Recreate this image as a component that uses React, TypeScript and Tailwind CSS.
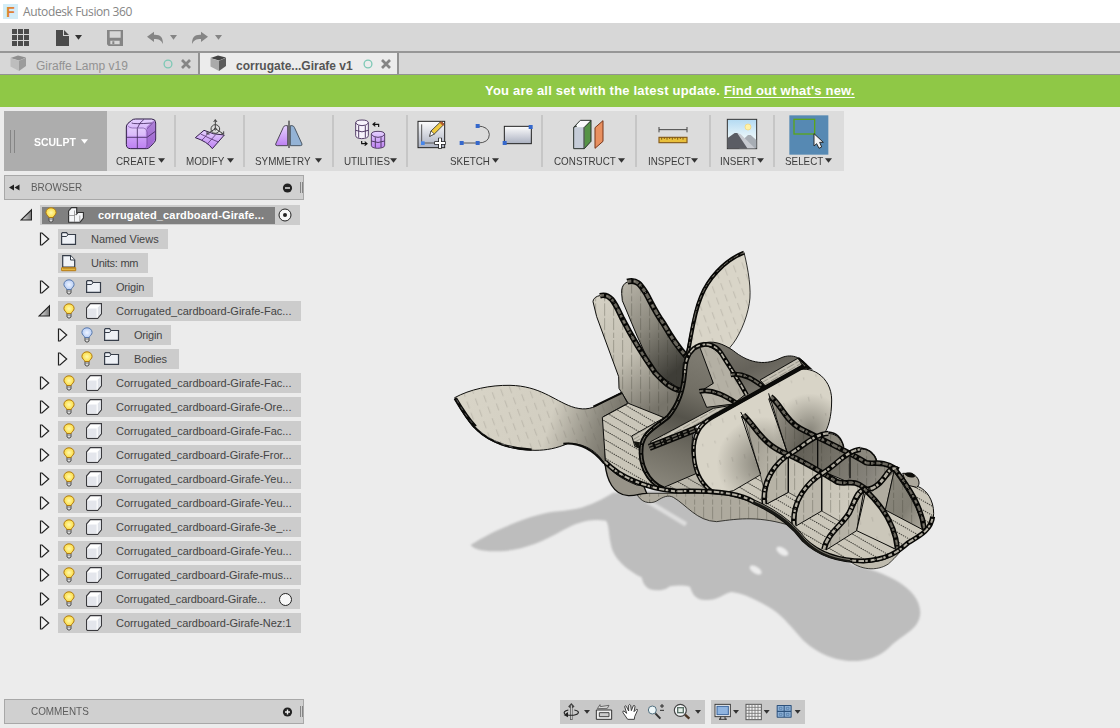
import React from "react";

/* ---------- shared bits ---------- */

const Caret = ({ className = "" }: { className?: string }) => (
  <svg className={"shrink-0 " + className} width="7" height="5" viewBox="0 0 7 5">
    <path d="M0 0.300H7L3.500 4.800Z" fill="currentColor" />
  </svg>
);

/* ---------- top bars ---------- */

const TitleBar = () => (
  <div className="flex h-[23px] shrink-0 items-center bg-white pl-[3px]">
    <span className="flex h-[15px] w-[15px] items-center justify-center bg-[#d3edf7] text-[14px] leading-none font-bold text-[#df8334]">
      F
    </span>
    <span className="ml-[5px] font-['Open_Sans'] text-[12px] tracking-[-0.380px] text-[#858585]">Autodesk Fusion 360</span>
  </div>
);

const QuickBar = () => (
  <div className="h-[30px] shrink-0 border-b-2 border-[#969696] bg-[#d7d7d7]">
    <svg width="240" height="28" viewBox="0 69 720 84">
      <path
        fill="#4b4b4b"
        d="M36 87h15v15h-15zM54 87h15v15h-15zM72 87h15v15h-15zM36 105h15v15h-15zM54 105h15v15h-15zM72 105h15v15h-15zM36 123h15v15h-15zM54 123h15v15h-15zM72 123h15v15h-15z"
      />
      <path fill="#4b4b4b" d="M168 90h21v18h18v30h-39zM192 90l15 15h-15z" />
      <path fill="#333" d="M225 105h21l-10.500 14z" />
      <path fill="#858585" fillRule="evenodd" d="M321 90h48v48h-43l-5-5zM329 94v19h33v-19zM331 122v11h28v-11zM337 124h6v8h-6z" />
      <g fill="#858585">
        <path d="M441 110l21-15v9c20-1 27 8 27 28c-6-12-12-15-27-15v9z" />
        <path d="M624 110l-21-15v9c-20-1-27 8-27 28c6-12 12-15 27-15v9z" />
        <path d="M510 105h21l-10.500 14zM645 105h21l-10.500 14z" />
      </g>
    </svg>
  </div>
);

const CubeGlyph = ({ dark }: { dark?: boolean }) => (
  <svg width="17" height="17" viewBox="0 0 17 17" className="shrink-0">
    <path d="M0.500 3L8 0.500L16 2.500L9 5.500Z" fill={dark ? "#444" : "#8f8f8f"} />
    <path d="M0.500 3.300L9 5.800V16L0.500 11.500Z" fill={dark ? "#aaa" : "#bdbdbd"} />
    <path d="M9 5.800L16 2.800V11L9 16Z" fill={dark ? "#5d5d5d" : "#9c9c9c"} />
  </svg>
);

const TabTail = () => (
  <>
    <svg width="10" height="10" viewBox="0 0 10 10" className="shrink-0">
      <circle cx="5" cy="5" r="3.900" fill="none" stroke="#7cc8b5" strokeWidth="1.300" />
    </svg>
    <svg width="10" height="10" viewBox="0 0 10 10" className="ml-[8px] shrink-0">
      <path d="M1 1L9 9M9 1L1 9" stroke="#858585" strokeWidth="2.700" />
    </svg>
  </>
);

const Tabs = () => (
  <div className="flex h-[22px] shrink-0 border-b border-[#929292] bg-[#d7d7d7] text-[12px]">
    <div className="flex w-[200px] items-center border-r-2 border-[#929292] pl-[10px]">
      <CubeGlyph />
      <span className="mt-[4px] ml-[9px] w-[127px] text-[#929292]">Giraffe Lamp v19</span>
      <TabTail />
    </div>
    <div className="flex w-[199px] items-center border-r-2 border-[#929292] bg-[#ececec] pl-[10px]">
      <CubeGlyph dark />
      <span className="mt-[4px] ml-[9px] w-[127px] font-bold whitespace-nowrap text-[#555]">corrugate...Girafe v1</span>
      <TabTail />
    </div>
  </div>
);

/* ---------- ribbon ---------- */

const Defs = () => (
  <svg width="0" height="0" className="absolute">
    <defs>
      <linearGradient id="violet" x1="0" y1="0" x2="0" y2="1">
        <stop offset="0" stopColor="#e5d2ff" />
        <stop offset="1" stopColor="#bd80f2" />
      </linearGradient>
      <linearGradient id="sheet" x1="0" y1="0" x2="0" y2="1">
        <stop offset="0" stopColor="#fdfdfd" />
        <stop offset="1" stopColor="#aab0c0" />
      </linearGradient>
      <linearGradient id="sky" x1="0" y1="0" x2="0" y2="1">
        <stop offset="0" stopColor="#b3daf2" />
        <stop offset="0.600" stopColor="#e8f5fa" />
      </linearGradient>
      <linearGradient id="tri" x1="0" y1="0" x2="1" y2="0">
        <stop offset="0" stopColor="#eee" />
        <stop offset="1" stopColor="#777" />
      </linearGradient>
      <radialGradient id="lit">
        <stop offset="0" stopColor="#fff9ae" />
        <stop offset="1" stopColor="#fbdc43" />
      </radialGradient>
      <radialGradient id="unlit">
        <stop offset="0" stopColor="#eef4ff" />
        <stop offset="1" stopColor="#b7cdf5" />
      </radialGradient>
    </defs>
  </svg>
);

const CreateIcon = () => (
  <svg width="36" height="40" viewBox="369 30 108 120">
    <path d="M379 66Q379 60 384 55L395 46Q399 42 407 42H455Q467 42 467 54V102Q467 108 463 112L451 125Q445 131 439 131H392Q379 131 379 118Z" fill="url(#violet)" stroke="#2d1b44" strokeWidth="3" />
    <path d="M440 66L460 47Q466 50 466 56V103L449 125Q442 130 440 125Z" fill="#8b50bd" opacity="0.600" />
    <path d="M388 70H436V92H384V76Z" fill="#fff" opacity="0.250" />
    <path d="M379 97H441L466 79M412 130V70Q418 52 432 43M395 54Q402 58 455 54" fill="none" stroke="#452a60" strokeWidth="2.500" />
    <path d="M384 62Q387 69 397 69H430Q441 70 441 82V118Q441 128 436 130M441 72L462 50" fill="none" stroke="#6a4590" strokeWidth="1.800" />
  </svg>
);

const ModifyIcon = () => (
  <svg width="36" height="40" viewBox="576 30 108 120">
    <path d="M586 98L612 76Q640 90 673 90L637 131Q622 110 586 98Z" fill="url(#violet)" stroke="#35204c" strokeWidth="3" />
    <path d="M602 87Q632 102 655 111M624 82Q618 96 606 105M647 89L622 117" fill="none" stroke="#5a3775" strokeWidth="2.500" />
    <g fill="none" stroke="#444" strokeWidth="3">
      <circle cx="646" cy="72" r="13" />
      <path d="M646 71V44M641 51L646 44L651 51M646 71L669 86M671 79V87H663M646 71L623 86M621 79V87H629" />
      <circle cx="646" cy="72" r="3" />
    </g>
  </svg>
);

const SymmetryIcon = () => (
  <svg width="36" height="40" viewBox="812 30 108 120">
    <path d="M862 62H855Q851 62 849 67L826 117Q825 122 831 122H862Z" fill="url(#violet)" stroke="#44404c" strokeWidth="2.800" />
    <path d="M870 62H875Q880 62 882 67L905 117Q906 122 900 122H870Z" fill="#94b3d6" stroke="#44505c" strokeWidth="2.800" />
    <path d="M866 47V129" stroke="#111" strokeWidth="3" />
  </svg>
);

const UtilitiesIcon = () => (
  <svg width="36" height="40" viewBox="1056 30 108 120">
    <g stroke="#4b3560" strokeWidth="2.800" fill="#f7f3fc">
      <path d="M1067 54V92Q1067 100 1085 101Q1105 100 1105 92V54Q1105 45 1086 45Q1067 45 1067 54Z" />
      <path d="M1067 54Q1072 62 1086 62Q1101 62 1105 54M1076 62V98M1096 62V98M1067 76Q1086 85 1105 76" fill="none" />
      <path d="M1114 88V121Q1114 129 1133 130Q1154 129 1154 121V88Q1154 79 1134 79Q1114 79 1114 88Z" fill="url(#violet)" />
      <path d="M1114 88Q1120 97 1134 97Q1149 97 1154 88M1126 97V128M1143 97V128M1114 108Q1134 117 1154 108" fill="none" />
    </g>
    <path d="M1136 66V58H1120M1126 52L1119 58L1126 64M1085 108V116H1100M1094 110L1101 116L1094 122" fill="none" stroke="#111" strokeWidth="3.500" />
  </svg>
);

const SketchIcons = () => (
  <svg width="124" height="40" viewBox="40 120 372 120">
    <rect x="55" y="139" width="80" height="79" fill="url(#sheet)" stroke="#222" strokeWidth="3" />
    <path d="M66 148V204H110" fill="none" stroke="#555" strokeWidth="3" />
    <path d="M64 199h11v11h-11z" fill="#4686ea" />
    <path d="M90 184L94 168L122 141Q128 139 133 148L105 176Z" fill="#f0cb40" stroke="#333" strokeWidth="2.500" />
    <path d="M120 143L130 153L134 148L125 139Z" fill="#b35b30" />
    <path d="M90 184L94 168L104 177Z" fill="#fff" stroke="#333" strokeWidth="2" />
    <path d="M121 188V221M104 204H138" stroke="#222" strokeWidth="11" />
    <path d="M121 190V219M106 204H136" stroke="#fff" strokeWidth="6" />
    <path d="M186 204H234Q269 204 269 178Q267 154 234 153" fill="none" stroke="#555" strokeWidth="3" />
    <path d="M180 198h12v12h-12zM228 198h12v12h-12zM228 147h12v12h-12z" fill="#3568cc" />
    <rect x="314" y="154" width="81" height="52" fill="url(#sheet)" stroke="#222" strokeWidth="3" />
    <path d="M387 150h12v12h-12zM309 198h12v12h-12z" fill="#3568cc" />
  </svg>
);

const ConstructIcon = () => (
  <svg width="36" height="40" viewBox="515 120 108 120">
    <path d="M523 157L543 136H575L555 157Z" fill="#fafbfc" />
    <path d="M523 157H555V221H523Z" fill="#c5ccd8" />
    <path d="M555 157L575 136V199L555 221Z" fill="#559347" />
    <path d="M523 157L543 136H575V199L555 221H523ZM523 157L533 153M555 157L575 137M554 157V221" fill="none" stroke="#29312c" strokeWidth="3" />
    <path d="M587 158L611 137V199L587 220Z" fill="#e89060" stroke="#7a3417" strokeWidth="3" />
  </svg>
);

const InspectIcon = () => (
  <svg width="36" height="40" viewBox="764 120 108 120">
    <path d="M776 156V172M860 156V172M776 164H860" stroke="#444" strokeWidth="3" />
    <rect x="776" y="187" width="84" height="16" fill="#e9c03b" stroke="#875c1b" strokeWidth="3.500" />
    <path d="M784 188v6M792 188v4M800 188v6M808 188v4M816 188v6M824 188v4M832 188v6M840 188v4M848 188v6" stroke="#6b4710" strokeWidth="2.500" />
  </svg>
);

const InsertIcon = () => (
  <svg width="36" height="40" viewBox="972 120 108 120">
    <rect x="982" y="133" width="88" height="88" fill="url(#sky)" stroke="#333" strokeWidth="3" />
    <circle cx="1044" cy="156" r="9" fill="#fff2a7" stroke="#efd277" strokeWidth="2" />
    <path d="M1018 205L1044 180H1052L1069 195V220H1018Z" fill="#a7adb4" />
    <path d="M983 189L1004 174H1012L1063 220H983Z" fill="#5b5d64" />
    <path d="M1012 175L1022 178L1065 220H1042L1022 190Z" fill="#c7cad0" />
  </svg>
);

const SelectIcon = () => (
  <svg width="40" height="40" viewBox="1168 120 120 120">
    <rect x="1169" y="121" width="117" height="118" fill="#5689b3" />
    <rect x="1183" y="133" width="62" height="44" fill="none" stroke="#5ba51a" strokeWidth="4" />
    <path d="M1243 176V213L1251 206L1258 220L1266 216L1260 202H1271Z" fill="#f5f5f5" stroke="#222" strokeWidth="2.800" />
  </svg>
);

type ToolGroup = { label: string; width: string; labelWidth: string; icon: React.ReactNode; last?: boolean };

const groups: ToolGroup[] = [
  { label: "CREATE", width: "w-[69px]", labelWidth: "w-[42px]", icon: <CreateIcon /> },
  { label: "MODIFY", width: "w-[69px]", labelWidth: "w-[41px]", icon: <ModifyIcon /> },
  { label: "SYMMETRY", width: "w-[89px]", labelWidth: "w-[60px]", icon: <SymmetryIcon /> },
  { label: "UTILITIES", width: "w-[74px]", labelWidth: "w-[46px]", icon: <UtilitiesIcon /> },
  { label: "SKETCH", width: "w-[135px]", labelWidth: "w-[42px]", icon: <SketchIcons /> },
  { label: "CONSTRUCT", width: "w-[94px]", labelWidth: "w-[64px]", icon: <ConstructIcon /> },
  { label: "INSPECT", width: "w-[74px]", labelWidth: "w-[43px]", icon: <InspectIcon /> },
  { label: "INSERT", width: "w-[64px]", labelWidth: "w-[37px]", icon: <InsertIcon /> },
  { label: "SELECT", width: "w-[69px]", labelWidth: "w-[40px]", icon: <SelectIcon />, last: true },
];

const Ribbon = () => (
  <div className="mt-[4px] ml-[4px] flex h-[60px] w-[840px] shrink-0 bg-[#dcdcdc]">
    <div className="flex w-[103px] items-center bg-[#adadad] pl-[6px] text-[11px] font-bold text-white">
      <span className="h-[23px] w-[5px] border-x border-[#858585]" />
      <span className="ml-[19px] w-[47px] pt-[2px]">
        <span className="inline-block origin-left scale-x-[0.950]">SCULPT</span>
      </span>
      <Caret className="h-[5px] w-[7px]" />
    </div>
    {groups.map((g) => (
      <div key={g.label} className={"flex pt-[4px] " + g.width}>
        <div className="flex flex-1 flex-col items-center pr-[2px]">
          {g.icon}
          <div className="flex h-[13px] items-center text-[11px] text-[#3c3c3c]">
            <span className={"block " + g.labelWidth}>
              <span className="inline-block origin-left scale-x-[0.895]">{g.label}</span>
            </span>
            <Caret className="mb-[2px] h-[5px] w-[7px] text-[#333]" />
          </div>
        </div>
        {!g.last && <span className="-ml-[2px] h-[52px] w-[2px] bg-[#c6c6c6]" />}
      </div>
    ))}
  </div>
);

/* ---------- browser tree ---------- */

const Bulb = ({ on = true }: { on?: boolean }) => (
  <svg width="12" height="16" viewBox="0 0 12 16" className="shrink-0">
    <path d="M4 10H8V14Q6 16.500 4 14Z" fill="#ddd" stroke="#4d4d4d" strokeWidth="1" />
    <path d="M4 12H8" stroke="#777" strokeWidth="1" />
    <path d="M6 0.800C3 0.800 0.900 2.900 0.900 5.500C0.900 7.800 3.300 8.700 3.900 10.500H8.100C8.700 8.700 11.100 7.800 11.100 5.500C11.100 2.900 9 0.800 6 0.800Z" fill={on ? "url(#lit)" : "url(#unlit)"} stroke={on ? "#af7912" : "#5879ac"} strokeWidth="1" />
  </svg>
);

const Folder = () => (
  <svg width="16" height="14" viewBox="0 0 16 14" className="shrink-0">
    <path d="M0.600 12.400V1.500L1.400 0.600H5.500L7 2.500H14.500V12.400Z" fill="#eef1f6" stroke="#363d49" strokeWidth="1.200" />
    <path d="M1 4.500H5.500L7 2.700" stroke="#363d49" strokeWidth="1" fill="none" />
  </svg>
);

const UnitsDoc = () => (
  <svg width="16" height="17" viewBox="0 0 16 17" className="shrink-0">
    <path d="M1.700 12V0.700H9.500L13.700 5V12Z" fill="#f1f4f8" stroke="#333b47" strokeWidth="1.200" />
    <path d="M9.500 0.700V5H13.700" fill="#fff" stroke="#333b47" />
    <path d="M0.700 12.700H14.700V15.700H0.700Z" fill="#f9ce50" stroke="#b5780f" />
    <path d="M3 13v1.500M5 13v1.500M7 13v1.500M9 13v1.500M11 13v1.500M13 13v1.500" stroke="#8b5a0d" strokeWidth="0.800" />
  </svg>
);

const Component = () => (
  <svg width="16" height="16" viewBox="0 0 16 16" className="shrink-0">
    <path d="M0.600 4.800L4.300 0.600H15.400V10.800L11.600 15.400H1.400L0.600 14.600Z" fill="#fff" stroke="#3a3a3e" strokeWidth="1.200" />
    <path d="M1.500 5.500H10.800V14.600H1.500Z" fill="#e4e6ec" />
    <path d="M11.500 5L14.800 1.300V10.500L11.500 14.500Z" fill="#dfe2e8" />
    <path d="M11.200 5.200V15" stroke="#fff" strokeWidth="0.800" />
  </svg>
);

const Assembly = () => (
  <svg width="16" height="16" viewBox="0 0 16 16" className="shrink-0">
    <path d="M0.600 4L3.500 0.600H8.700V7L10 5.500H15.400V11L12 15.200H0.600Z" fill="#f5f6f8" stroke="#303030" strokeWidth="1.100" />
    <path d="M6.500 8V15M0.700 8.500H6.500L8.700 6.500M6.500 3.500V8.500M11.800 8.500V14.500" stroke="#8a8a8a" strokeWidth="0.800" fill="none" />
  </svg>
);

const Expander = ({ state }: { state?: "open" | "closed" }) => (
  <svg width="12" height="14" viewBox="0 0 12 14" className="shrink-0">
    {state === "open" && <path d="M1 12H11.500V1.800Z" fill="url(#tri)" stroke="#222" strokeWidth="1.100" />}
    {state === "closed" && <path d="M2.500 1V13H4L10.700 7L4 1Z" fill="#f3f3f3" stroke="#222" strokeWidth="1.200" />}
  </svg>
);

type Row = {
  text: string;
  level: 1 | 2;
  exp?: "open" | "closed";
  bulb?: "on" | "off";
  icon: "folder" | "units" | "comp";
  width: string;
  radio?: boolean;
  tracking?: string;
};

const comp = (text: string, extra: Partial<Row> = {}): Row => ({
  text,
  level: 1,
  exp: "closed",
  bulb: "on",
  icon: "comp",
  width: "w-[243px]",
  ...extra,
});

const rows: Row[] = [
  { text: "Named Views", level: 1, exp: "closed", icon: "folder", width: "w-[110px]" },
  { text: "Units: mm", level: 1, icon: "units", width: "w-[90px]", tracking: "tracking-[-0.250px]" },
  { text: "Origin", level: 1, exp: "closed", bulb: "off", icon: "folder", width: "w-[95px]", tracking: "tracking-[-0.200px]" },
  comp("Corrugated_cardboard-Girafe-Fac...", { exp: "open" }),
  { text: "Origin", level: 2, exp: "closed", bulb: "off", icon: "folder", width: "w-[95px]", tracking: "tracking-[-0.200px]" },
  { text: "Bodies", level: 2, exp: "closed", bulb: "on", icon: "folder", width: "w-[103px]", tracking: "tracking-[-0.150px]" },
  comp("Corrugated_cardboard-Girafe-Fac..."),
  comp("Corrugated_cardboard-Girafe-Ore..."),
  comp("Corrugated_cardboard-Girafe-Fac..."),
  comp("Corrugated_cardboard-Girafe-Fror...", { tracking: "tracking-[-0.030px]" }),
  comp("Corrugated_cardboard-Girafe-Yeu..."),
  comp("Corrugated_cardboard-Girafe-Yeu..."),
  comp("Corrugated_cardboard-Girafe-3e_..."),
  comp("Corrugated_cardboard-Girafe-Yeu..."),
  comp("Corrugated_cardboard-Girafe-mus...", { tracking: "tracking-[-0.060px]" }),
  comp("Corrugated_cardboard-Girafe...", { radio: true, width: "w-[242px]", tracking: "tracking-[-0.120px]" }),
  comp("Corrugated_cardboard-Girafe-Nez:1", { tracking: "tracking-[-0.040px]" }),
];

const TreeRow = ({ r }: { r: Row }) => (
  <div className={"mt-[4px] flex h-[20px] items-center " + (r.level === 1 ? "pl-[38px]" : "pl-[56px]")}>
    <Expander state={r.exp} />
    <div className={"ml-[8px] flex h-[20px] items-center bg-[#cccccc] text-[11px] whitespace-nowrap text-[#444] " + r.width}>
      {r.bulb && (
        <span className="flex w-[25px] pl-[5px]">
          <Bulb on={r.bulb === "on"} />
        </span>
      )}
      <span className="flex w-[33px] pl-[3px]">
        {r.icon === "folder" && <Folder />}
        {r.icon === "units" && <UnitsDoc />}
        {r.icon === "comp" && <Component />}
      </span>
      <span className={r.tracking}>{r.text}</span>
      {r.radio && <span className="mr-[8px] ml-auto h-[13px] w-[13px] rounded-full border border-[#222] bg-[#f7f7f7]" />}
    </div>
  </div>
);

const PanelHeader = ({ title, plus }: { title: string; plus?: boolean }) => (
  <div className="ml-[4px] flex h-[25px] w-[300px] shrink-0 items-center border border-[#a8a8a8] bg-[#d0d0d0]">
    <span className="flex w-[26px] pl-[4px]">
      {!plus && (
        <svg width="11" height="7" viewBox="0 0 11 7">
          <path d="M5 0.500V6.500L0 3.500ZM10.500 0.500V6.500L5.500 3.500Z" fill="#222" />
        </svg>
      )}
    </span>
    <span className="w-[251px] text-[11px] text-[#5c5c5c]">
      <span className="inline-block origin-left scale-x-[0.900]">{title}</span>
    </span>
    <svg width="11" height="10" viewBox="-1 0 11 10" className="shrink-0">
      <circle cx="4.500" cy="5" r="4.600" fill="#222" />
      <path d={plus ? "M2 5H7M4.500 2.500V7.500" : "M2 5H7"} stroke="#eee" strokeWidth="1.400" />
    </svg>
    <span className="ml-[7px] h-[11px] w-[3px] border-x border-[#858585]" />
  </div>
);

const Browser = () => (
  <div className="flex w-[304px] shrink-0 flex-col pt-[4px] pb-[4px]">
    <PanelHeader title="BROWSER" />
    <div className="mt-[5px] flex h-[20px] items-center pl-[20px]">
      <Expander state="open" />
      <div className="ml-[8px] flex h-[20px] w-[260px] items-center bg-[#cccccc] pl-[2px]">
        <div className="flex h-[17px] w-[233px] items-center bg-[#808080] pl-[3px]">
          <Bulb />
          <span className="ml-[11px] flex w-[30px]">
            <Assembly />
          </span>
          <span className="text-[11px] font-bold tracking-[0.140px] whitespace-nowrap text-white">corrugated_cardboard-Girafe...</span>
        </div>
        <svg width="14" height="14" viewBox="0 0 14 14" className="ml-[3px]">
          <circle cx="7" cy="7" r="6" fill="#f7f7f7" stroke="#222" />
          <circle cx="7" cy="7" r="2" fill="#222" />
        </svg>
      </div>
    </div>
    {rows.map((r, i) => (
      <TreeRow key={i} r={r} />
    ))}
    <div className="flex-1" />
    <PanelHeader title="COMMENTS" plus />
  </div>
);

/* ---------- 3D model ---------- */

const Face = ({ d, fill, hatch, line = 3 }: { d: string; fill: string; hatch?: string; line?: number }) => (
  <>
    <path d={d} fill={fill} stroke="#0c0c0a" strokeWidth={line} strokeLinejoin="round" />
    {hatch && <path d={d} fill={hatch} />}
  </>
);

const Flute = ({ d, w = 15, light }: { d: string; w?: number; light?: boolean }) => (
  <g fill="none" strokeLinejoin="round">
    <path d={d} stroke="#080806" strokeWidth={w} />
    <path d={d} stroke={light ? "#b5b1a5" : "#67645b"} strokeWidth={w - 9} strokeDasharray="12 7 16 4 7 9" />
    <path d={d} stroke="#a09c90" strokeWidth={2} strokeDasharray="4 15 6 22" />
  </g>
);

const VA = "translate(440 230) scale(0.33333)";
const VB = "translate(580 330) scale(0.33333)";
const VC = "translate(720 390) scale(0.33333)";
const VS = "translate(440 470) scale(0.33333)";

const CAPSULE =
  "M340 350C345 310 360 285 390 268L640 125C690 100 755 140 755 210C755 260 745 295 730 315L600 380L540 435L460 482C430 490 390 485 370 460C340 420 336 380 340 350Z";
const KEEL =
  "M590 70C600 97 630 104 650 93C670 80 685 74 700 82C740 105 770 153 830 155C900 145 960 138 1055 168L1040 130C980 90 920 70 860 70Z";

const Model = () => (
  <svg width="816" height="529" viewBox="304 171 816 529" className="shrink-0">
    <defs>
      <filter id="soft" x="-5%" y="-5%" width="110%" height="110%">
        <feGaussianBlur stdDeviation="3.500" />
      </filter>
      <pattern id="vert" width="27" height="110" patternUnits="userSpaceOnUse">
        <path d="M8 0V38M8 44V80M8 88V104" stroke="#34332c" strokeWidth="1.800" opacity="0.500" />
      </pattern>
      <pattern id="slant" width="27" height="73" patternUnits="userSpaceOnUse" patternTransform="rotate(-20)">
        <path d="M8 0V22M8 36V58" stroke="#57554c" strokeWidth="1.600" opacity="0.380" />
      </pattern>
      <pattern id="faint" width="38" height="120" patternUnits="userSpaceOnUse" patternTransform="rotate(-14)">
        <path d="M8 0V14M8 60V68" stroke="#57554c" strokeWidth="1.600" opacity="0.350" />
      </pattern>
      <pattern id="dots" width="7" height="24" patternUnits="userSpaceOnUse" patternTransform="rotate(30)">
        <path d="M0 8H4.500" stroke="#161612" strokeWidth="2.400" />
      </pattern>
      <pattern id="tight" width="30" height="9" patternUnits="userSpaceOnUse" patternTransform="rotate(-30)">
        <path d="M0 4H25" stroke="#33322c" strokeWidth="1.400" opacity="0.800" />
      </pattern>
      <linearGradient id="earL" x1="0" y1="0" x2="1" y2="0.150">
        <stop offset="0" stopColor="#d9d5c8" />
        <stop offset="0.600" stopColor="#d2cec1" />
        <stop offset="0.880" stopColor="#8b887d" />
        <stop offset="1" stopColor="#77746a" />
      </linearGradient>
      <linearGradient id="hornB" x1="0" y1="0" x2="0.500" y2="1">
        <stop offset="0" stopColor="#bcb8ac" />
        <stop offset="0.500" stopColor="#8b887d" />
        <stop offset="1" stopColor="#3e3d37" />
      </linearGradient>
      <linearGradient id="hornF" x1="0" y1="0" x2="0.500" y2="1">
        <stop offset="0" stopColor="#d6d2c5" />
        <stop offset="0.550" stopColor="#c3bfb2" />
        <stop offset="1" stopColor="#77746a" />
      </linearGradient>
      <linearGradient id="dark" x1="0" y1="0" x2="0.700" y2="1">
        <stop offset="0" stopColor="#7d7a70" />
        <stop offset="0.500" stopColor="#65625a" />
        <stop offset="1" stopColor="#88857b" />
      </linearGradient>
      <linearGradient id="dark2" gradientUnits="userSpaceOnUse" x1="200" y1="460" x2="340" y2="80">
        <stop offset="0" stopColor="#8b887d" />
        <stop offset="0.300" stopColor="#716e64" />
        <stop offset="0.550" stopColor="#55534b" />
        <stop offset="0.750" stopColor="#716e64" />
        <stop offset="1" stopColor="#7d7a70" />
      </linearGradient>
      <radialGradient id="shadeA" gradientUnits="userSpaceOnUse" cx="550" cy="400" r="140">
        <stop offset="0" stopColor="#4a483f" stopOpacity="0.600" />
        <stop offset="1" stopColor="#4a483f" stopOpacity="0" />
      </radialGradient>
      <radialGradient id="shadeB" gradientUnits="userSpaceOnUse" cx="690" cy="300" r="110">
        <stop offset="0" stopColor="#4a483f" stopOpacity="0.550" />
        <stop offset="1" stopColor="#4a483f" stopOpacity="0" />
      </radialGradient>
      <linearGradient id="wall" gradientUnits="userSpaceOnUse" x1="90" y1="200" x2="430" y2="330">
        <stop offset="0" stopColor="#a5a195" />
        <stop offset="0.350" stopColor="#c3bfb2" />
        <stop offset="1" stopColor="#d0ccbf" />
      </linearGradient>
      <linearGradient id="wallD" gradientUnits="userSpaceOnUse" x1="160" y1="100" x2="530" y2="260">
        <stop offset="0" stopColor="#918d82" />
        <stop offset="0.250" stopColor="#625f56" />
        <stop offset="0.550" stopColor="#77746a" />
        <stop offset="0.800" stopColor="#85827a" />
        <stop offset="1" stopColor="#a09c91" />
      </linearGradient>
      <linearGradient id="wallE" x1="0" y1="0" x2="1" y2="1">
        <stop offset="0" stopColor="#8b887d" />
        <stop offset="0.600" stopColor="#827f74" />
        <stop offset="1" stopColor="#b0aca0" />
      </linearGradient>
    </defs>

    {/* ground shadow */}
    <g transform={VS} filter="url(#soft)">
      <path
        fill="#bdbdbd"
        d="M92 225C160 180 280 132 340 125C410 119 440 115 520 68L700 60L1040 120L1240 285C1330 305 1440 350 1441 428C1438 480 1390 490 1350 530C1320 560 1280 573 1240 573C1170 573 1110 535 1080 500C1050 465 1020 430 985 410C940 385 910 370 875 366C850 370 840 390 797 390C765 390 757 370 750 350C725 345 710 347 690 349C675 360 665 361 650 361C620 361 610 345 605 322C560 300 520 265 513 225C505 190 508 165 498 152C440 145 410 160 370 180C310 215 240 245 165 244C120 244 100 235 92 225Z"
      />
      <path d="M620 92L738 163" stroke="#dedede" strokeWidth="13" />
      <ellipse cx="1027" cy="244" rx="20" ry="10" transform="rotate(32 1027 244)" fill="#ececec" />
      <ellipse cx="947" cy="300" rx="20" ry="10" transform="rotate(32 947 300)" fill="#ececec" />
    </g>

    {/* ears and horns */}
    <g transform={VA}>
      <Face d="M912 67C925 120 935 180 928 220C920 270 895 325 870 352L860 385L735 385C750 330 755 260 780 200C800 150 850 90 912 67Z" fill="#d9d5c8" hatch="url(#slant)" line={2.500} />
      <Flute d="M912 68C850 92 803 150 783 200C758 260 755 320 740 385" w={12} />
      <Face d="M545 190C543 162 560 150 590 152C615 170 630 210 650 250C680 300 715 355 735 380L725 480L640 425L590 315L547 212Z" fill="url(#hornB)" hatch="url(#vert)" />
      <Flute d="M562 155C590 146 602 165 618 190C635 220 645 245 670 280C690 315 712 350 738 378" w={18} />
      <Face d="M459 215C460 200 480 192 505 198C525 215 535 240 548 265C575 315 600 360 640 420C665 450 690 475 725 482L720 530L685 565L650 575L565 520L537 475L536 440L470 260Z" fill="url(#hornF)" hatch="url(#vert)" />
      <Flute d="M480 197C512 189 524 218 545 262C580 330 605 370 645 428C670 455 690 475 724 482" w={17} />
      <Face d="M44 503C90 478 150 465 210 466C300 468 340 510 395 530C425 540 450 540 480 522L545 487L563 520L490 560L497 710C480 670 440 640 385 640C350 655 320 661 285 661C220 661 150 640 110 600C80 570 65 540 44 503Z" fill="url(#earL)" hatch="url(#slant)" />
      <path d="M46 505C65 540 85 575 112 600C150 636 210 657 275 659" fill="none" stroke="#0b0b09" strokeWidth="7" />
      <path d="M46 505C62 532 80 562 106 590" fill="none" stroke="#0b0b09" strokeWidth="11" />
      <path d="M50 509C68 543 88 572 114 597C150 630 190 645 220 652" fill="none" stroke="#aaa" strokeWidth="1.500" strokeDasharray="12 12" />
      <path d="M370 641C420 637 460 660 492 700" fill="none" stroke="#0b0b09" strokeWidth="6" />
      <path d="M460 530L545 489" stroke="#0b0b09" strokeWidth="6" />
    </g>

    {/* underside */}
    <g transform={VS}>
      <path d={KEEL} fill="#aeaa9e" stroke="#1c1c18" strokeWidth="2.500" />
      <path d={KEEL} fill="url(#vert)" />
      <path d="M495 -20C500 30 520 75 565 77C590 78 600 70 620 70L600 20Z" fill="#979388" stroke="#0b0b09" strokeWidth="4" />
      <path d="M1225 270C1260 300 1310 305 1345 282C1370 260 1385 240 1395 225Z" fill="#bfbbae" stroke="#1c1c18" strokeWidth="2.500" />
    </g>

    {/* base plate */}
    <g transform={VC}>
      <Face d="M-175 300C-100 310 -20 300 60 325C150 350 200 390 240 430C290 490 350 515 430 518C500 515 530 495 560 460C600 435 640 420 641 370C641 330 620 300 595 290L520 250L300 200L120 250L30 240L-80 262Z" fill="#cbc7ba" hatch="url(#dots)" />
    </g>

    {/* skull section */}
    <g transform={VB}>
      <Face d="M360 42C400 28 430 42 460 62C500 95 550 110 600 85C630 70 665 78 688 115L540 210L380 220Z" fill="url(#dark)" />
      <Face d="M67 262L145 220L265 268L250 360L300 480L170 465C120 445 95 425 77 402Z" fill="#cac6b9" hatch="url(#dots)" />
      <Face d="M245 475L340 420L440 480L430 495Z" fill="#bcb8ac" hatch="url(#dots)" line={2} />
      <Face d="M155 318L262 258L232 290L195 315L180 352L165 350Z" fill="#c7c3b6" hatch="url(#tight)" />
      <path d="M160 334L180 337L176 356L168 350Z" fill="#14140f" />
      <Face d="M310 100L340 55L370 45L400 160L365 185L380 230L460 220L345 290C330 330 335 400 350 430L245 475C200 445 180 400 185 350C190 320 215 300 250 275C280 250 300 210 305 180Z" fill="url(#dark2)" />
      <Face d="M358 48C390 40 420 70 435 90C460 130 480 165 500 190L460 222L380 232L360 185L400 160Z" fill="#b4b0a4" hatch="url(#slant)" />
      <Flute d="M500 195C470 140 445 105 425 72C405 40 370 35 342 55C317 78 317 100 314 130C310 180 295 225 265 260C230 290 190 305 184 350C178 400 200 455 250 476" w={14} light />
      <path d="M314 130C310 180 295 225 265 260C230 290 190 305 184 350C178 400 200 455 250 476" fill="none" stroke="#0b0b09" strokeWidth="9" />
      <path d="M314 130C310 180 295 225 265 260C230 290 190 305 184 350C178 400 200 455 250 476" fill="none" stroke="#8b887d" strokeWidth="2.500" strokeDasharray="24 5" />
      <Flute d="M358 184C400 176 440 200 470 220" w={15} />
      <Flute d="M452 134C490 128 520 148 552 172" w={15} />
      <Face d="M540 150L655 84L668 108L560 172Z" fill="#c6c2b5" hatch="url(#tight)" />
      <Face d="M212 335L400 235L455 226L340 290L215 355Z" fill="#cac6b9" hatch="url(#tight)" />
      <path d="M655 84L688 114L675 112L540 190" fill="none" stroke="#0b0b09" strokeWidth="7" />
      <Flute d="M208 352L350 296" w={22} />
      <path d="M208 352L350 296" stroke="#0b0b09" strokeWidth="4" />
      <path d={CAPSULE} fill="#d8d4c7" stroke="#0c0c0a" strokeWidth="3" />
      <path d={CAPSULE} fill="url(#faint)" />
      <path d={CAPSULE} fill="url(#shadeA)" />
      <path d={CAPSULE} fill="url(#shadeB)" />
      <Flute d="M672 108L395 263C352 288 339 325 341 370C343 420 358 455 392 482" w={13} light />
      <path d="M672 108L390 266" stroke="#0b0b09" strokeWidth="9" />
    </g>

    {/* muzzle */}
    <g transform={VC}>
      <Face d="M548 250L575 250C600 262 602 285 590 292L560 285Z" fill="#aca89c" />
      <path d="M553 252C565 243 585 250 585 260C575 265 562 263 553 252Z" fill="#0d0d0a" />
      <Face d="M293 145C320 118 360 130 371 170L368 185L300 150Z" fill="#8b887d" hatch="url(#vert)" />
      <Face d="M390 190C420 165 465 180 470 212L440 225Z" fill="#8b887d" hatch="url(#vert)" />
      <Face d="M150 22C185 40 190 90 240 115C290 140 380 180 440 215C465 220 490 210 530 238L500 300L440 300L205 200Z" fill="url(#wallD)" hatch="url(#vert)" />
      <Face d="M70 75C110 110 120 160 200 190C260 215 300 245 350 275C380 285 400 265 432 295L410 422L305 363L205 307L140 342L130 290L120 250Z" fill="url(#wall)" hatch="url(#vert)" line={2} />
      <Face d="M205 195V307L140 342C132 290 165 220 205 195Z" fill="#b7b3a6" hatch="url(#vert)" />
      <Face d="M305 250V363L228 408C222 340 260 280 305 250Z" fill="#bab6aa" hatch="url(#vert)" />
      <path d="M293 145V238M390 200V265M205 195V307M305 250V363" stroke="#0b0b09" strokeWidth="4" />
      <path d="M522 245L496 362L450 310Z" fill="#b0aca0" stroke="#111" strokeWidth="2" />
      <Face d="M522 245C560 300 600 360 610 420L496 360Z" fill="url(#wallE)" hatch="url(#vert)" />
      <Face d="M432 300L410 422L318 480C325 430 365 400 390 370Z" fill="#b6b2a6" hatch="url(#vert)" />
      <Face d="M437 305C480 345 520 400 528 478L410 422Z" fill="#cbc7ba" hatch="url(#faint)" />
      <Flute d="M152 20C185 45 195 90 240 115C290 142 380 182 438 218C460 225 485 208 530 238" w={17} />
      <Flute d="M70 75C110 112 125 162 200 192C260 218 300 245 352 276C380 285 400 265 436 296" w={17} />
      <Flute d="M133 342C125 270 170 215 210 192C250 168 285 132 325 130" w={16} light />
      <Flute d="M222 405C215 330 265 275 310 248C350 224 380 182 422 178" w={16} light />
      <path d="M325 126C350 128 365 145 371 170M422 174C448 176 462 190 470 212" fill="none" stroke="#0b0b09" strokeWidth="4" />
      <Flute d="M312 478C322 430 362 410 387 370C405 335 410 302 436 298C465 300 485 275 502 250C512 235 522 232 535 240" w={17} light />
      <Flute d="M432 296C480 340 525 400 532 475" w={16} />
      <Flute d="M525 238C565 290 605 350 613 418" w={16} />
      <path d="M146 26L203 190M64 78L122 252M146 10L152 34M62 66L74 88" stroke="#0b0b09" strokeWidth="3" />
      <Flute d="M-345 215C-300 262 -220 296 -130 304C-20 300 60 310 100 335C180 370 222 410 252 450C300 495 360 513 430 513C500 510 535 485 565 458C600 437 633 420 638 380" w={15} light />
      <path d="M100 335C180 370 222 410 252 450C290 487 330 505 390 511" fill="none" stroke="#1a1a16" strokeWidth="10" />
      <path d="M105 334C182 367 224 407 255 447C290 482 330 502 390 509" fill="none" stroke="#8b887d" strokeWidth="2.500" />
    </g>
  </svg>
);

/* ---------- navigation bar ---------- */

const NavBar = () => (
  <div className="flex h-[24px] shrink-0 gap-[6px] pl-[256px]">
    <div className="flex w-[145px] bg-[#c8c8c8]">
      <svg width="31" height="24" viewBox="30 30 93 72">
        <path d="M64 44V90M57 52L64 44L71 52" stroke="#444" strokeWidth="7" fill="none" />
        <path d="M64 46V88" stroke="#fff" strokeWidth="2.500" />
        <path d="M44 72Q38 64 55 60M73 60Q89 63 84 70Q77 78 51 75" fill="none" stroke="#222" strokeWidth="3.500" />
        <path d="M54 66L41 75L54 82Z" fill="#222" />
        <path d="M102 60H120L111 71Z" fill="#333" />
      </svg>
      <svg width="26" height="24" viewBox="123 30 78 72">
        <path d="M139 60H185V88H139Z" fill="#eee" stroke="#333" strokeWidth="3" />
        <path d="M148 68H177V80H148Z" fill="#ccc" stroke="#444" strokeWidth="3" />
        <path d="M142 56L150 44L151 50L177 46L172 55Z" fill="#ddd" stroke="#555" strokeWidth="2.500" />
      </svg>
      <svg width="26" height="24" viewBox="201 30 78 72">
        <path d="M233 88L219 68Q217 62 222 63L230 70L224 50Q225 45 229 49L236 63L236 46Q239 41 242 46L244 62L250 47Q255 45 255 50L252 65L259 58Q264 57 262 62L254 80L253 88Z" fill="#fff" stroke="#333" strokeWidth="2.800" />
      </svg>
      <svg width="26" height="24" viewBox="279 30 78 72">
        <path d="M316 70L331 86" stroke="#333" strokeWidth="6" />
        <circle cx="307" cy="60" r="12" fill="#edf6f8" stroke="#527080" strokeWidth="3" />
        <path d="M336 42V54M330 48H342M330 61H342" stroke="#222" strokeWidth="2.800" />
      </svg>
      <svg width="36" height="24" viewBox="357 30 108 72">
        <path d="M405 74L418 86" stroke="#4a3525" strokeWidth="7" />
        <circle cx="391" cy="61" r="18" fill="#f4f7f8" stroke="#444" strokeWidth="3.500" />
        <rect x="383" y="53" width="17" height="15" fill="#e5efe9" stroke="#5b7167" strokeWidth="4" />
        <path d="M435 60H453L444 71Z" fill="#333" />
      </svg>
    </div>
    <div className="flex w-[94px] bg-[#c8c8c8]">
      <svg width="31" height="24" viewBox="484 30 93 72">
        <rect x="496" y="43" width="46" height="37" fill="#f5f5f5" stroke="#333" strokeWidth="2.800" />
        <rect x="502" y="49" width="34" height="25" fill="#8fb4e0" stroke="#3a649b" strokeWidth="3" />
        <path d="M513 80V87H508M526 80V87H531M508 88H531" stroke="#333" strokeWidth="2.800" fill="none" />
        <path d="M550 60H568L559 71Z" fill="#333" />
      </svg>
      <svg width="31" height="24" viewBox="577 30 93 72">
        <rect x="589" y="43" width="46" height="46" fill="#f3f3f3" stroke="#555" strokeWidth="3" />
        <path d="M598 43V89M607 43V89M616 43V89M625 43V89M589 52H635M589 61H635M589 70H635M589 79H635" stroke="#777" strokeWidth="2.600" />
        <path d="M642 60H660L651 71Z" fill="#333" />
      </svg>
      <svg width="32" height="24" viewBox="670 30 96 72">
        <rect x="681" y="45" width="45" height="38" rx="2" fill="#2d527c" />
        <path d="M684 48H702V62H684ZM705 48H723V62H705ZM684 66H702V80H684ZM705 66H723V80H705Z" fill="#8fb2d7" />
        <path d="M689 52H697V58H689ZM710 52H718V58H710ZM689 70H697V76H689ZM710 70H718V76H710Z" stroke="#4c75a1" strokeWidth="2" fill="none" />
        <path d="M735 60H753L744 71Z" fill="#333" />
      </svg>
    </div>
  </div>
);

/* ---------- page ---------- */

export default function App() {
  return (
    <div className="flex h-[728px] w-[1120px] flex-col overflow-hidden bg-[#ececec] font-['Liberation_Sans',sans-serif] leading-none">
      <Defs />
      <TitleBar />
      <QuickBar />
      <Tabs />
      <div className="flex h-[32px] shrink-0 items-center bg-[#8fc846] pb-[2px] pl-[485px] text-[13px] font-bold tracking-[0.200px] whitespace-pre text-white">
        <span>You are all set with the latest update. </span>
        <a className="underline underline-offset-2">Find out what's new.</a>
      </div>
      <Ribbon />
      <div className="flex flex-1">
        <Browser />
        <div className="flex flex-1 flex-col">
          <Model />
          <NavBar />
        </div>
      </div>
    </div>
  );
}
